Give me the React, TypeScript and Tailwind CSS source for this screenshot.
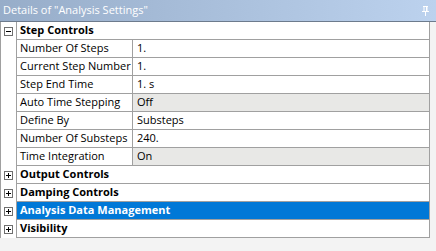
const font = { fontFamily: '"Segoe UI", "Open Sans", Lato, sans-serif' };

type Row = { label: string; value: string; grey?: boolean };

const stepRows: Row[] = [
  { label: "Number Of Steps", value: "1." },
  { label: "Current Step Number", value: "1." },
  { label: "Step End Time", value: "1. s" },
  { label: "Auto Time Stepping", value: "Off", grey: true },
  { label: "Define By", value: "Substeps" },
  { label: "Number Of Substeps", value: "240." },
  { label: "Time Integration", value: "On", grey: true },
];

function Box({ open }: { open?: boolean }) {
  return (
    <svg width="9" height="9" viewBox="0 0 9 9" className="block">
      <rect x="0.5" y="0.5" width="8" height="8" fill="#fff" stroke="#6f6f6f" />
      <line x1="2" y1="4.5" x2="7" y2="4.5" stroke="#000" />
      {!open && <line x1="4.5" y1="2" x2="4.5" y2="7" stroke="#000" />}
    </svg>
  );
}

function Group({ label, open, selected }: { label: string; open?: boolean; selected?: boolean }) {
  return (
    <div className="flex h-[18px]">
      <div className="flex w-[15px] items-center justify-center bg-white">
        <Box open={open} />
      </div>
      <div
        className={`flex flex-1 items-center whitespace-nowrap border-b border-l border-[#a0a0a0] pl-[3px] text-[11px] font-bold ${
          selected ? "bg-[#0078d7] text-white" : "bg-white text-black"
        }`}
      >
        {label}
      </div>
    </div>
  );
}

export default function App() {
  return (
    <div className="h-[251px] w-[436px] overflow-hidden bg-[#f3f3f3]" style={font}>
      <div className="flex h-[22px] items-center justify-between border-b border-[#6d7b8d] bg-gradient-to-r from-[#97adc9] to-[#bcd2ee] pl-[3px] pr-[7px] text-[11px] text-white">
        <span className="whitespace-nowrap">Details of "Analysis Settings"</span>
        <svg width="7" height="10" viewBox="0 0 7 10">
          <rect x="1" y="0" width="5" height="1" fill="#fff" />
          <rect x="1.5" y="1" width="1" height="4" fill="#fff" />
          <rect x="4" y="1" width="1.5" height="4" fill="#fff" />
          <rect x="0" y="5" width="7" height="1" fill="#fff" />
          <rect x="3" y="6" width="1" height="4" fill="#fff" />
        </svg>
      </div>
      <div className="w-[430px] border-l border-r border-[#a0a0a0] bg-white">
        <Group label="Step Controls" open />
        {stepRows.map((r) => (
          <div key={r.label} className="flex h-[18px] text-[11px] text-black">
            <div className="w-[15px] bg-white" />
            <div className="flex w-[116px] items-center whitespace-nowrap border-b border-l border-[#a0a0a0] pl-[3px]">
              {r.label}
            </div>
            <div
              className={`flex flex-1 items-center border-b border-l border-[#a0a0a0] pl-[4px] ${
                r.grey ? "bg-[#e8e8e6]" : "bg-white"
              }`}
            >
              {r.value}
            </div>
          </div>
        ))}
        <Group label="Output Controls" />
        <Group label="Damping Controls" />
        <Group label="Analysis Data Management" selected />
        <Group label="Visibility" />
      </div>
    </div>
  );
}
